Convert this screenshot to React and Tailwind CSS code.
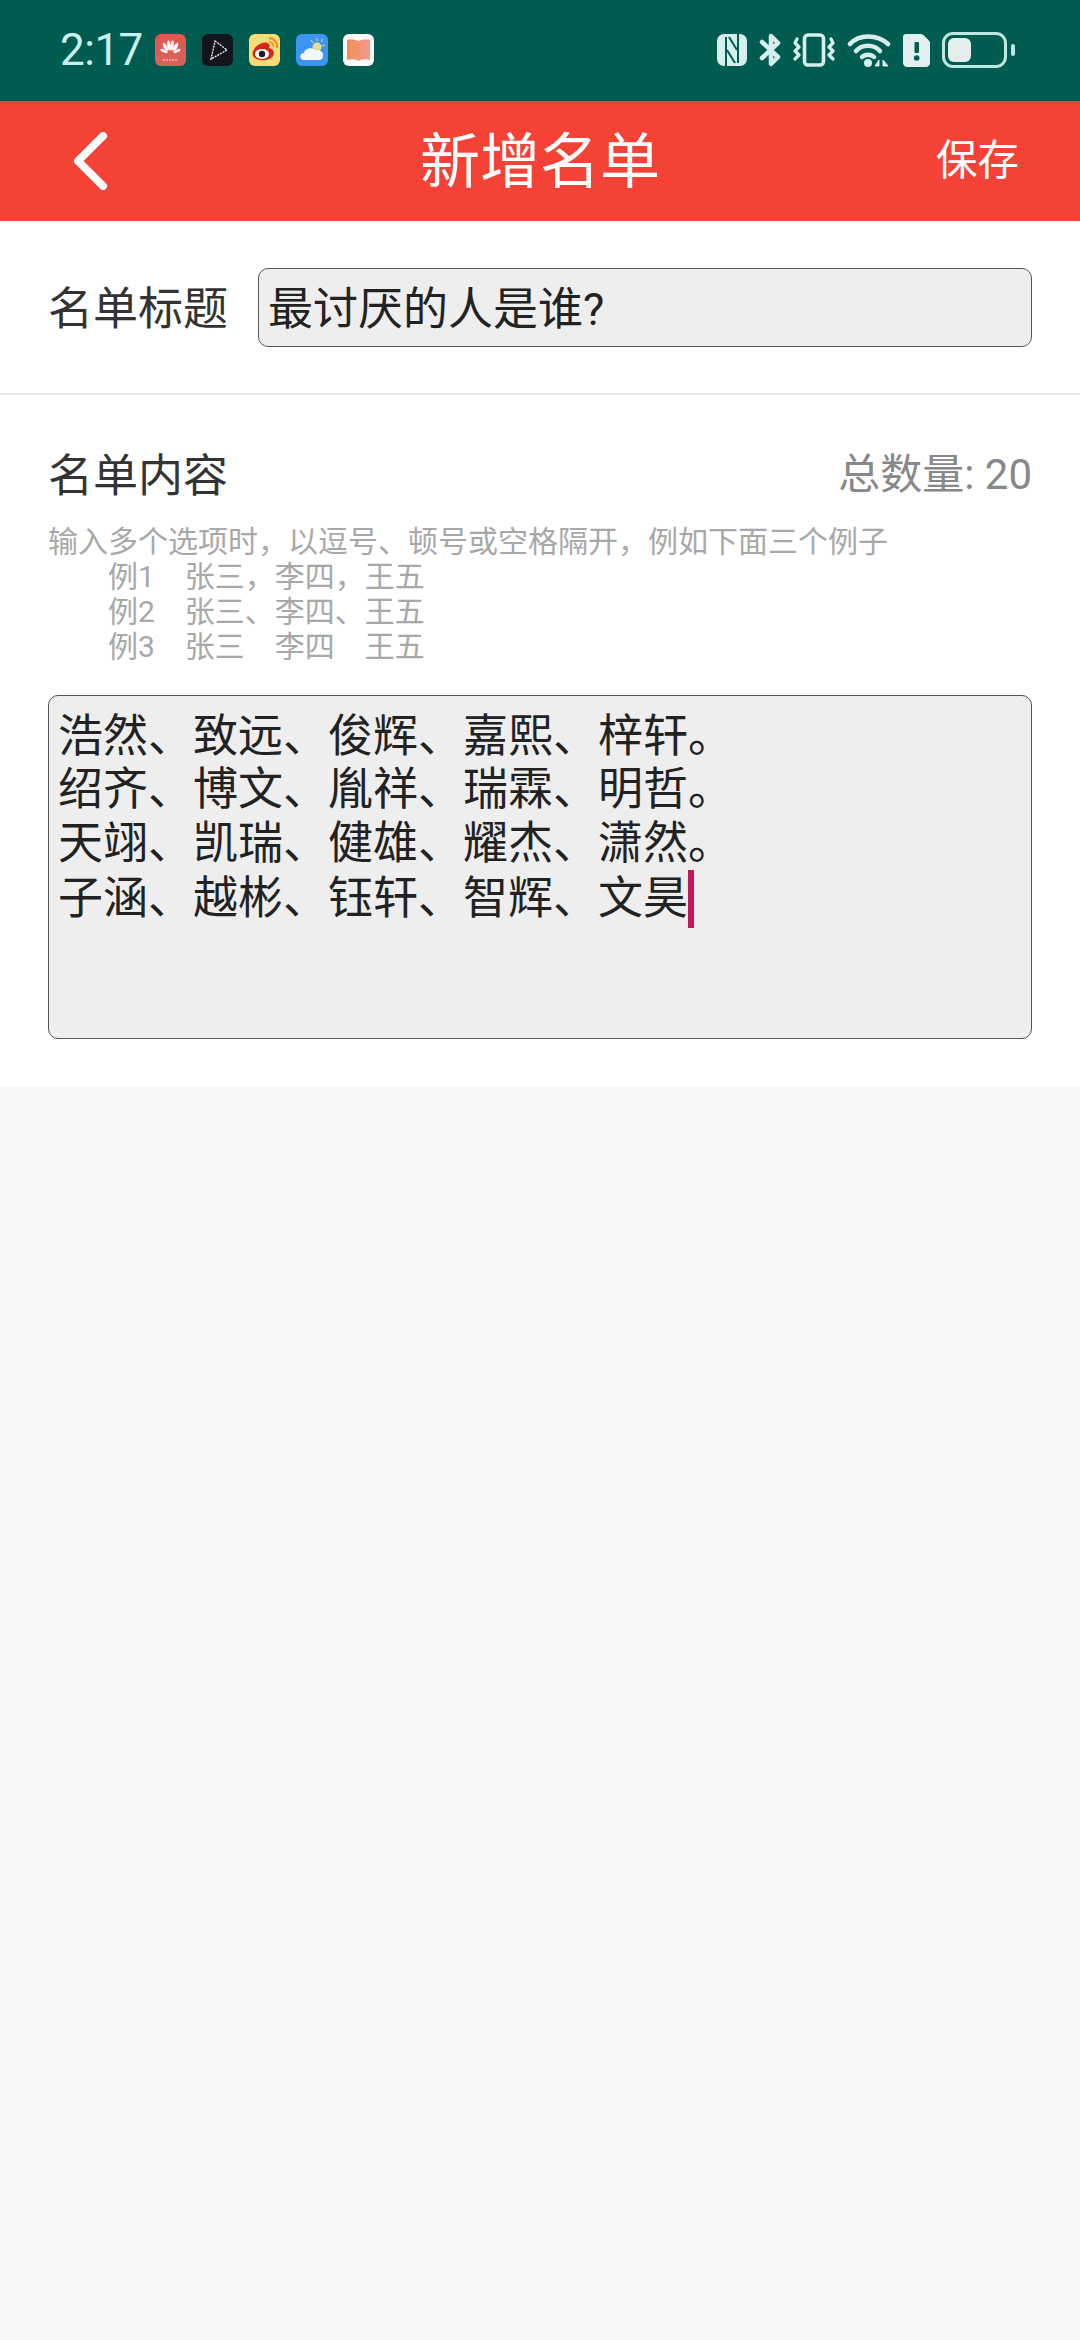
import React from "react";

function HuaweiIcon() {
  return (
    <svg width="32" height="32" viewBox="0 0 32 32" className="shrink-0">
      <defs>
        <linearGradient id="hw" x1="0" y1="0" x2="0" y2="1">
          <stop offset="0" stopColor="#e2564f" />
          <stop offset="1" stopColor="#d8625c" />
        </linearGradient>
      </defs>
      <rect width="31" height="32" rx="6" fill="url(#hw)" />
      <g fill="#fdf3f2">
        <ellipse cx="14" cy="11.500" rx="1.700" ry="5" transform="rotate(-8 14 11.500)" />
        <ellipse cx="17" cy="11.500" rx="1.700" ry="5" transform="rotate(8 17 11.500)" />
        <ellipse cx="10.500" cy="13" rx="1.800" ry="4.600" transform="rotate(-30 10.500 13)" />
        <ellipse cx="20.500" cy="13" rx="1.800" ry="4.600" transform="rotate(30 20.500 13)" />
        <ellipse cx="9" cy="17" rx="1.500" ry="3.800" transform="rotate(-65 9 17)" />
        <ellipse cx="22" cy="17" rx="1.500" ry="3.800" transform="rotate(65 22 17)" />
      </g>
      <path d="M8 26 H23" stroke="#fbdede" strokeWidth="1.200" strokeDasharray="2 1" fill="none" />
    </svg>
  );
}

function PlayIcon() {
  return (
    <svg width="32" height="32" viewBox="0 0 32 32" className="shrink-0">
      <rect width="31" height="32" rx="6" fill="#14141c" />
      <path d="M13 7 L25 16 L9 25 Z" stroke="#ffffff" strokeWidth="1.300" strokeDasharray="2 1" fill="none" />
    </svg>
  );
}

function WeiboIcon() {
  return (
    <svg width="32" height="32" viewBox="0 0 32 32" className="shrink-0">
      <rect width="31" height="32" rx="6" fill="#f7dd74" />
      <path d="M3.500 20 C3.500 14 11 8 17 8.500 C21 9.500 21 12 20 14 C25 15 26 19 24 22 C20 28 4.500 28 3.500 20 Z" fill="#d5261e" />
      <ellipse cx="13" cy="20" rx="7" ry="5" fill="#fff" />
      <circle cx="13" cy="20" r="3.200" fill="#1d1d1d" />
      <path d="M20 4 C25 4 29 9 28 14" stroke="#f08a24" strokeWidth="2" fill="none" />
      <path d="M20 8 C23 8 25 11 24.500 13" stroke="#f08a24" strokeWidth="1.600" fill="none" />
    </svg>
  );
}

function CloudIcon() {
  return (
    <svg width="32" height="32" viewBox="0 0 32 32" className="shrink-0">
      <rect width="32" height="32" rx="6" fill="#3d94f2" />
      <circle cx="21" cy="13" r="4.500" fill="#e4dd8a" />
      <path d="M21 4v3M29 11l-3 1M15 6l2 3M27 5l-2 3" stroke="#e4dd8a" strokeWidth="1" />
      <path d="M8 26 C3 26 3 19 8 19 C9 13 18 13 20 17 C23 15 28 18 27 22 C27 25 25 26 23 26 Z" fill="#f5f8fb" />
    </svg>
  );
}

function BookIcon() {
  return (
    <svg width="32" height="32" viewBox="0 0 32 32" className="shrink-0">
      <defs>
        <linearGradient id="bk" x1="0" y1="0" x2="1" y2="0">
          <stop offset="0" stopColor="#ef8f52" />
          <stop offset="1" stopColor="#f69a90" />
        </linearGradient>
      </defs>
      <rect width="31" height="32" rx="6" fill="#fbfbfb" />
      <path d="M4 6 C9 5 13 6 15.500 7 C18 6 22 5 27 6 V26 C23 25 18 25 15.500 27 C13 25 8 25 4 26 Z" fill="url(#bk)" />
    </svg>
  );
}

function NfcIcon() {
  return (
    <svg width="30" height="32" viewBox="0 0 30 32" className="shrink-0">
      <rect width="30" height="32" rx="7" fill="#d6eeec" />
      <g stroke="#005c50" strokeWidth="2" fill="none">
        <path d="M9 3 V32" />
        <path d="M21 0 V29" />
        <path d="M12 3 L20 16" />
        <path d="M10 16 L18 29" />
      </g>
    </svg>
  );
}

function BluetoothIcon() {
  return (
    <svg width="22" height="34" viewBox="0 0 22 34" className="shrink-0" fill="none" stroke="#d6eeec" strokeWidth="4.500" strokeLinejoin="round" strokeLinecap="round">
      <path d="M3 9 L19 24 L12 31 L12 3 L19 10 L3 25" />
    </svg>
  );
}

function VibrateIcon() {
  return (
    <svg width="42" height="34" viewBox="0 0 42 34" className="shrink-0" fill="none" stroke="#d6eeec" strokeLinecap="round" strokeLinejoin="round">
      <rect x="11.500" y="2" width="19" height="30" rx="3.500" strokeWidth="3.600" />
      <path d="M4 6 L2 10 L6 14 L2 18 L6 22 L2 26" strokeWidth="3.200" />
      <path d="M38 6 L40 10 L36 14 L40 18 L36 22 L40 26" strokeWidth="3.200" />
    </svg>
  );
}

function WifiIcon() {
  return (
    <svg width="44" height="34" viewBox="0 0 44 34" className="shrink-0" fill="none" stroke="#d6eeec" strokeWidth="4.500" strokeLinecap="round">
      <path d="M3 11 C12 1 30 1 41 11" />
      <path d="M9 18 C15 11 27 11 33 18" />
      <path d="M15 24 C18 21 24 21 27 24" />
      <circle cx="21" cy="30" r="4" fill="#d6eeec" stroke="none" />
      <path d="M28 33 L32 27 V33 Z M36 27 V33 L41 33 Z" fill="#d6eeec" strokeWidth="1" strokeLinecap="butt" />
    </svg>
  );
}

function SimIcon() {
  return (
    <svg width="27" height="33" viewBox="0 0 27 33" className="shrink-0">
      <path d="M3 0H18C19 0 20 0.500 21 1.500L25.500 6C26.500 7 27 8 27 9V29C27 31 25 33 23 33H4C2 33 0 31 0 29V3C0 1 1 0 3 0Z" fill="#e1f0ee" />
      <rect x="11.500" y="8" width="4.500" height="11" rx="1" fill="#005c50" />
      <circle cx="13.700" cy="24" r="2.800" fill="#005c50" />
    </svg>
  );
}

function BatteryIcon() {
  return (
    <div className="flex items-center gap-[4px] shrink-0">
      <div className="w-[65px] h-[36px] rounded-[11px] border-[3px] border-[#bfe6e3] p-[3px] flex">
        <div className="w-[23px] h-full rounded-[6px] bg-[#e3eeed]" />
      </div>
      <div className="w-[4px] h-[12px] rounded-[2px] bg-[#bfe6e3]" />
    </div>
  );
}

export default function App() {
  const font = "font-['Roboto','Noto_Sans_CJK_SC',sans-serif]";
  return (
    <div className={`w-[1080px] h-[2340px] bg-[#f8f8f8] flex flex-col ${font}`}>
      <div className="h-[101px] bg-[#005c50] flex items-center pl-[60px] pr-[65px] pb-[1px] shrink-0">
        <span className="text-[44px] tracking-[-0.5px] leading-none text-[#c9f0ec] w-[95px]">2:17</span>
        <div className="flex items-center gap-[15px]">
          <HuaweiIcon />
          <PlayIcon />
          <WeiboIcon />
          <CloudIcon />
          <BookIcon />
        </div>
        <div className="ml-auto flex items-center gap-[12px]">
          <NfcIcon />
          <BluetoothIcon />
          <VibrateIcon />
          <WifiIcon />
          <SimIcon />
          <BatteryIcon />
        </div>
      </div>

      <div className="h-[120px] bg-[#f44336] flex items-center justify-between pl-[72px] pr-[61px] shrink-0 relative">
        <svg width="36" height="58" viewBox="0 0 36 58" fill="none" stroke="#ffffff" strokeWidth="8" strokeLinecap="round" strokeLinejoin="round">
          <path d="M31 4 L6 29 L31 54" />
        </svg>
        <span className="absolute left-0 right-0 pt-[3px] text-center text-[60px] leading-none text-white pointer-events-none">新增名单</span>
        <span className="text-[41.500px] leading-none text-white">保存</span>
      </div>

      <div className="bg-white h-[174px] flex items-center px-[48px] border-b-[2px] border-[#e8e8e8] shrink-0">
        <span className="text-[45px] leading-none text-[#333333] w-[210px] shrink-0 pt-[4px]">名单标题</span>
        <div className="flex-1 h-[79px] rounded-[10px] border border-[#555555] bg-[#eeeeee] flex items-center pl-[9px] pt-[5px] text-[45px] leading-none text-[#222222]">
          最讨厌的人是谁?
        </div>
      </div>

      <div className="bg-white h-[692px] px-[48px] pt-[55px] shrink-0 flex flex-col">
        <div className="flex items-center justify-between h-[50px]">
          <span className="text-[45px] leading-none text-[#333333] pt-[2px]">名单内容</span>
          <span className="text-[42px] leading-none text-[#888888]">总数量: 20</span>
        </div>
        <div className="mt-[24px] text-[30px] leading-[35px] text-[#a8a8a8]">
          <div>输入多个选项时，以逗号、顿号或空格隔开，例如下面三个例子</div>
          <div className="pl-[60px]">例1　张三，李四，王五</div>
          <div className="pl-[60px]">例2　张三、李四、王五</div>
          <div className="pl-[60px]">例3　张三　李四　王五</div>
        </div>
        <div className="mt-[31px] h-[344px] rounded-[10px] border border-[#555555] bg-[#eeeeee] pl-[9px] pt-[14px] text-[45px] leading-[53.300px] text-[#222222]">
          <div>浩然、致远、俊辉、嘉熙、梓轩。</div>
          <div>绍齐、博文、胤祥、瑞霖、明哲。</div>
          <div>天翊、凯瑞、健雄、耀杰、潇然。</div>
          <div className="flex items-center">
            <span>子涵、越彬、钰轩、智辉、文昊</span>
            <span className="w-[6px] h-[58px] bg-[#c2185b] shrink-0" />
          </div>
        </div>
      </div>
    </div>
  );
}
